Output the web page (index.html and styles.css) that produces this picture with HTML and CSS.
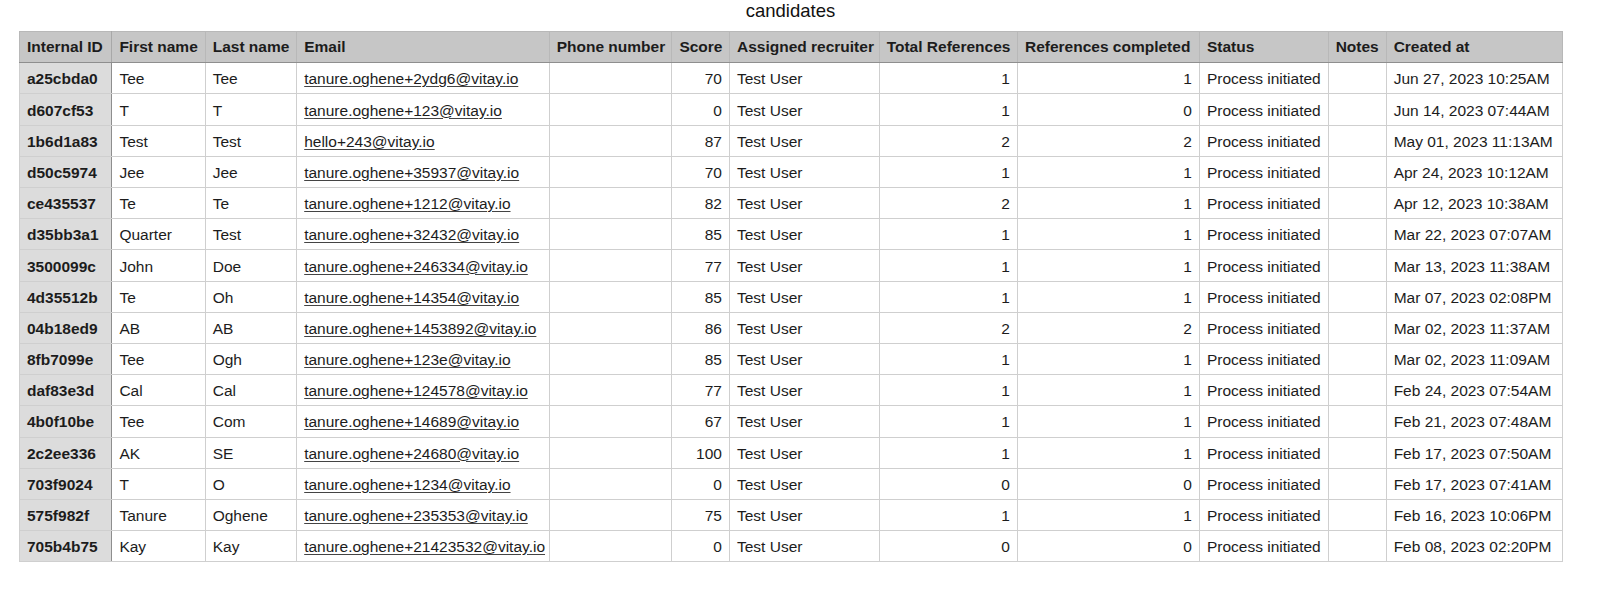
FILE: index.html
```html
<!DOCTYPE html>
<html lang="en">
<head>
<meta charset="utf-8">
<title>candidates</title>
<link rel="stylesheet" href="styles.css">
</head>
<body>
<div class="sheet">
  <div class="sheet-title">candidates</div>
  <table class="grid">
    <colgroup>
      <col class="c-id"><col class="c-first"><col class="c-last"><col class="c-email"><col class="c-phone"><col class="c-score"><col class="c-rec"><col class="c-total"><col class="c-done"><col class="c-status"><col class="c-notes"><col class="c-created">
    </colgroup>
    <thead>
      <tr>
        <th>Internal ID</th><th>First name</th><th>Last name</th><th>Email</th><th>Phone number</th><th>Score</th><th>Assigned recruiter</th><th>Total References</th><th>References completed</th><th>Status</th><th>Notes</th><th>Created at</th>
      </tr>
    </thead>
    <tbody>
      <tr><td class="id">a25cbda0</td><td>Tee</td><td>Tee</td><td><span class="mail">tanure.oghene+2ydg6@vitay.io</span></td><td></td><td class="num">70</td><td>Test User</td><td class="num">1</td><td class="num">1</td><td>Process initiated</td><td></td><td>Jun 27, 2023 10:25AM</td></tr>
      <tr><td class="id">d607cf53</td><td>T</td><td>T</td><td><span class="mail">tanure.oghene+123@vitay.io</span></td><td></td><td class="num">0</td><td>Test User</td><td class="num">1</td><td class="num">0</td><td>Process initiated</td><td></td><td>Jun 14, 2023 07:44AM</td></tr>
      <tr><td class="id">1b6d1a83</td><td>Test</td><td>Test</td><td><span class="mail">hello+243@vitay.io</span></td><td></td><td class="num">87</td><td>Test User</td><td class="num">2</td><td class="num">2</td><td>Process initiated</td><td></td><td>May 01, 2023 11:13AM</td></tr>
      <tr><td class="id">d50c5974</td><td>Jee</td><td>Jee</td><td><span class="mail">tanure.oghene+35937@vitay.io</span></td><td></td><td class="num">70</td><td>Test User</td><td class="num">1</td><td class="num">1</td><td>Process initiated</td><td></td><td>Apr 24, 2023 10:12AM</td></tr>
      <tr><td class="id">ce435537</td><td>Te</td><td>Te</td><td><span class="mail">tanure.oghene+1212@vitay.io</span></td><td></td><td class="num">82</td><td>Test User</td><td class="num">2</td><td class="num">1</td><td>Process initiated</td><td></td><td>Apr 12, 2023 10:38AM</td></tr>
      <tr><td class="id">d35bb3a1</td><td>Quarter</td><td>Test</td><td><span class="mail">tanure.oghene+32432@vitay.io</span></td><td></td><td class="num">85</td><td>Test User</td><td class="num">1</td><td class="num">1</td><td>Process initiated</td><td></td><td>Mar 22, 2023 07:07AM</td></tr>
      <tr><td class="id">3500099c</td><td>John</td><td>Doe</td><td><span class="mail">tanure.oghene+246334@vitay.io</span></td><td></td><td class="num">77</td><td>Test User</td><td class="num">1</td><td class="num">1</td><td>Process initiated</td><td></td><td>Mar 13, 2023 11:38AM</td></tr>
      <tr><td class="id">4d35512b</td><td>Te</td><td>Oh</td><td><span class="mail">tanure.oghene+14354@vitay.io</span></td><td></td><td class="num">85</td><td>Test User</td><td class="num">1</td><td class="num">1</td><td>Process initiated</td><td></td><td>Mar 07, 2023 02:08PM</td></tr>
      <tr><td class="id">04b18ed9</td><td>AB</td><td>AB</td><td><span class="mail">tanure.oghene+1453892@vitay.io</span></td><td></td><td class="num">86</td><td>Test User</td><td class="num">2</td><td class="num">2</td><td>Process initiated</td><td></td><td>Mar 02, 2023 11:37AM</td></tr>
      <tr><td class="id">8fb7099e</td><td>Tee</td><td>Ogh</td><td><span class="mail">tanure.oghene+123e@vitay.io</span></td><td></td><td class="num">85</td><td>Test User</td><td class="num">1</td><td class="num">1</td><td>Process initiated</td><td></td><td>Mar 02, 2023 11:09AM</td></tr>
      <tr><td class="id">daf83e3d</td><td>Cal</td><td>Cal</td><td><span class="mail">tanure.oghene+124578@vitay.io</span></td><td></td><td class="num">77</td><td>Test User</td><td class="num">1</td><td class="num">1</td><td>Process initiated</td><td></td><td>Feb 24, 2023 07:54AM</td></tr>
      <tr><td class="id">4b0f10be</td><td>Tee</td><td>Com</td><td><span class="mail">tanure.oghene+14689@vitay.io</span></td><td></td><td class="num">67</td><td>Test User</td><td class="num">1</td><td class="num">1</td><td>Process initiated</td><td></td><td>Feb 21, 2023 07:48AM</td></tr>
      <tr><td class="id">2c2ee336</td><td>AK</td><td>SE</td><td><span class="mail">tanure.oghene+24680@vitay.io</span></td><td></td><td class="num">100</td><td>Test User</td><td class="num">1</td><td class="num">1</td><td>Process initiated</td><td></td><td>Feb 17, 2023 07:50AM</td></tr>
      <tr><td class="id">703f9024</td><td>T</td><td>O</td><td><span class="mail">tanure.oghene+1234@vitay.io</span></td><td></td><td class="num">0</td><td>Test User</td><td class="num">0</td><td class="num">0</td><td>Process initiated</td><td></td><td>Feb 17, 2023 07:41AM</td></tr>
      <tr><td class="id">575f982f</td><td>Tanure</td><td>Oghene</td><td><span class="mail">tanure.oghene+235353@vitay.io</span></td><td></td><td class="num">75</td><td>Test User</td><td class="num">1</td><td class="num">1</td><td>Process initiated</td><td></td><td>Feb 16, 2023 10:06PM</td></tr>
      <tr><td class="id">705b4b75</td><td>Kay</td><td>Kay</td><td><span class="mail">tanure.oghene+21423532@vitay.io</span></td><td></td><td class="num">0</td><td>Test User</td><td class="num">0</td><td class="num">0</td><td>Process initiated</td><td></td><td>Feb 08, 2023 02:20PM</td></tr>
    </tbody>
  </table>
</div>
</body>
</html>
```

FILE: styles.css
```css
html, body {
  margin: 0;
  padding: 0;
  background: #ffffff;
}

body {
  font-family: "Liberation Sans", Arial, Helvetica, sans-serif;
  color: #1c1c1c;
}

.sheet {
  width: 1543px;
  padding-left: 19px;
}

.sheet-title {
  font-size: 18.5px;
  line-height: 21px;
  text-align: center;
  margin-bottom: 9.7px;
  color: #111111;
}

.grid {
  width: 1543px;
  table-layout: fixed;
  border-collapse: collapse;
  font-size: 15.5px;
  border: 1px solid #b4b4b4;
}

.c-id { width: 92.4px; }
.c-first { width: 93.3px; }
.c-last { width: 91.5px; }
.c-email { width: 252.5px; }
.c-phone { width: 122.7px; }
.c-score { width: 57.6px; }
.c-rec { width: 149.7px; }
.c-total { width: 138.3px; }
.c-done { width: 182px; }
.c-status { width: 128.7px; }
.c-notes { width: 58px; }
.c-created { width: 176px; }

.grid th,
.grid td {
  border: 1px solid #cfcfcf;
  padding: 2px 7px 0 7px;
  white-space: nowrap;
  overflow: hidden;
  text-align: left;
  vertical-align: middle;
}

.grid thead tr {
  height: 31.6px;
}

.grid th {
  background: #c6c6c6;
  font-weight: bold;
  border-color: #b8b8b8;
  border-bottom: 1px solid #8e8e8e;
  padding-top: 1px;
}

.grid tbody tr {
  height: 31.2px;
}

.grid td.id {
  background: #dcdcdc;
  font-weight: bold;
  border-right: 1px solid #8e8e8e;
}

.grid thead th:first-child {
  border-right-color: #a8a8a8;
}

.grid td.num {
  text-align: right;
}

.mail {
  text-decoration: underline;
  text-underline-offset: 2px;
  text-decoration-color: #444444;
}
```
